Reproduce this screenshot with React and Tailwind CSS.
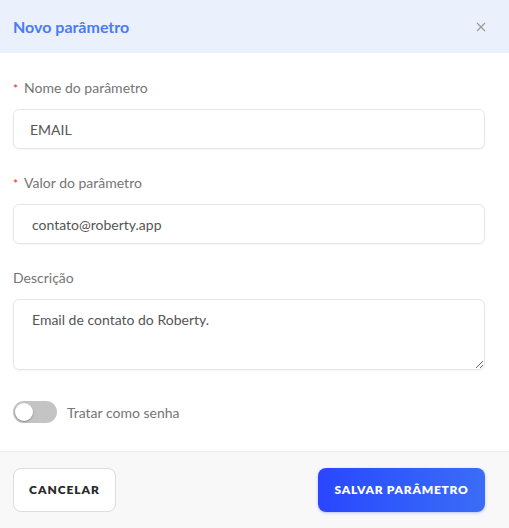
import React, { useState } from 'react';

const font = { fontFamily: 'Lato, "Open Sans", sans-serif' };

function Label({ required, children }) {
  return (
    <div className="flex items-center gap-[6px] text-[14px] text-[#757575] mb-[11px] leading-5">
      {required && <span className="text-[#f5222d] text-[12px] leading-none mt-[1px]">*</span>}
      <span>{children}</span>
    </div>
  );
}

export default function App() {
  const [secret, setSecret] = useState(false);

  return (
    <div className="w-[509px] h-[528px] bg-white flex flex-col overflow-hidden" style={font}>
      <div className="h-[53px] bg-[#eaf0fc] flex items-center justify-between pl-[13px] pr-[23px] shrink-0">
        <h1 className="text-[16px] font-bold text-[#4a7cf0]">Novo parâmetro</h1>
        <button className="text-[#9a9a9a] leading-none">
          <svg width="10" height="10" viewBox="0 0 10 10" stroke="currentColor" strokeWidth="1.2">
            <path d="M1 1l8 8M9 1l-8 8" />
          </svg>
        </button>
      </div>

      <div className="flex-1 px-[13px] pt-[25px] pr-[24px]">
        <Label required>Nome do parâmetro</Label>
        <input
          defaultValue="EMAIL"
          className="w-full h-[40px] rounded-[6px] border border-[#e6e6e6] px-[16px] text-[14px] text-[#555] outline-none shadow-[0_1px_2px_rgba(0,0,0,0.04)]"
        />

        <div className="h-[24px]" />
        <Label required>Valor do parâmetro</Label>
        <input
          defaultValue="contato@roberty.app"
          className="w-full h-[40px] rounded-[6px] border border-[#e6e6e6] px-[18px] text-[14px] text-[#555] outline-none shadow-[0_1px_2px_rgba(0,0,0,0.04)]"
        />

        <div className="h-[24px]" />
        <Label>Descrição</Label>
        <textarea
          defaultValue="Email de contato do Roberty."
          className="block w-full h-[71px] rounded-[6px] border border-[#e6e6e6] px-[18px] py-[9px] text-[14px] text-[#555] outline-none shadow-[0_1px_2px_rgba(0,0,0,0.04)]"
        />

        <div className="flex items-center gap-[10px] mt-[31px]">
          <button
            onClick={() => setSecret(!secret)}
            className={`w-[44px] h-[22px] rounded-full p-[2px] flex ${secret ? 'bg-[#2c4cff] justify-end' : 'bg-[#c4c4c4] justify-start'}`}
          >
            <span className="w-[18px] h-[18px] rounded-full bg-white shadow-[0_1px_2px_rgba(0,0,0,0.3)]" />
          </button>
          <span className="text-[14px] text-[#757575]">Tratar como senha</span>
        </div>
      </div>

      <div className="h-[77px] shrink-0 bg-[#f8f8f8] border-t border-[#ececec] flex items-center justify-between px-[13px] pr-[24px]">
        <button className="h-[44px] w-[103px] rounded-[8px] border border-[#dcdcdc] bg-white text-[12px] font-extrabold tracking-[0.08em] text-[#2a2a2a]">
          CANCELAR
        </button>
        <button className="h-[44px] w-[167px] rounded-[8px] bg-gradient-to-r from-[#2a46ff] to-[#3b6cf6] text-[12px] font-extrabold tracking-[0.06em] text-white shadow-[0_1px_3px_rgba(40,70,255,0.3)]">
          SALVAR PARÂMETRO
        </button>
      </div>
    </div>
  );
}
